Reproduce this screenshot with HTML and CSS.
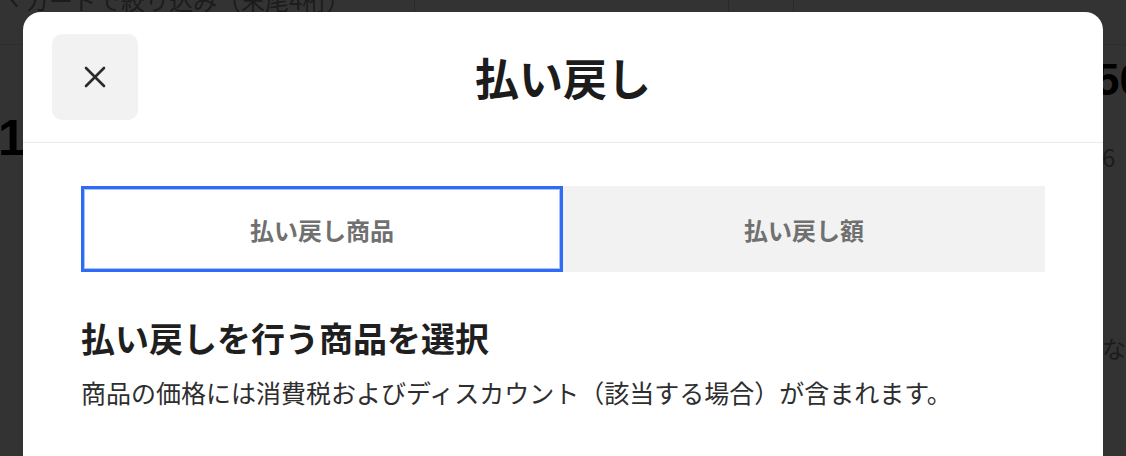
FILE: index.html
```html
<!DOCTYPE html>
<html lang="ja">
<head>
<meta charset="utf-8">
<title>払い戻し</title>
<link rel="stylesheet" href="styles.css">
</head>
<body>
<div class="page">
  <div class="toolbar">
    <div class="search"><span class="search-icon">ヽ</span>カードで絞り込み（末尾4桁）</div>
    <div class="tool-box wide"></div>
    <div class="tool-box narrow"></div>
  </div>
  <div class="summary">
    <div class="left-col">
      <div class="big-num">1,280</div>
    </div>
    <div class="right-col">
      <div class="big-amount">¥550</div>
      <div class="small-num">6</div>
      <div class="note">なし</div>
    </div>
  </div>
</div>

<div class="overlay">
  <div class="modal">
    <div class="modal-header">
      <button class="close-btn" aria-label="閉じる">
        <svg width="22" height="22" viewBox="0 0 22 22" aria-hidden="true">
          <path d="M2 2 L20 20 M20 2 L2 20" stroke="#2b2b2b" stroke-width="2.6" stroke-linecap="round" fill="none"/>
        </svg>
      </button>
      <h1 class="modal-title">払い戻し</h1>
      <span class="header-spacer"></span>
    </div>
    <div class="modal-body">
      <div class="tabs">
        <button class="tab tab-active">払い戻し商品</button>
        <button class="tab">払い戻し額</button>
      </div>
      <h2 class="section-title">払い戻しを行う商品を選択</h2>
      <p class="section-desc">商品の価格には消費税およびディスカウント（該当する場合）が含まれます。</p>
    </div>
  </div>
</div>
</body>
</html>
```

FILE: styles.css
```css
html, body {
  margin: 0;
  padding: 0;
  overflow: hidden;
}

body {
  width: 1126px;
  height: 456px;
  background: #ffffff;
  font-family: "Noto Sans CJK JP", "Noto Sans", sans-serif;
  color: #222;
}

/* background page (behind overlay) */
.page {
  width: 1126px;
  height: 456px;
  overflow: hidden;
}

.toolbar {
  display: flex;
  height: 44px;
  border-bottom: 1px solid #e6e6e6;
}

.search {
  width: 415px;
  box-sizing: border-box;
  border-right: 1px solid #cfcfcf;
  font-size: 24px;
  line-height: 24px;
  color: #8a8a8a;
  margin-top: -12px;
  white-space: nowrap;
  padding-left: 0;
}

.search-icon {
  display: inline-block;
  width: 25px;
  color: #8a8a8a;
}

.tool-box {
  box-sizing: border-box;
  border-right: 1px solid #cfcfcf;
}

.tool-box.wide { width: 314px; }
.tool-box.narrow { width: 65px; }

.summary {
  display: flex;
  justify-content: space-between;
  width: 1126px;
}

.left-col {
  padding-top: 68px;
}

.big-num {
  font-family: "Liberation Sans", sans-serif;
  font-weight: 700;
  font-size: 50px;
  line-height: 50px;
  color: #000;
  margin-left: -2px;
}

.right-col {
  width: 24px;
  padding-top: 10px;
  white-space: nowrap;
}

.big-amount {
  font-family: "Liberation Sans", sans-serif;
  font-weight: 700;
  font-size: 44px;
  line-height: 50px;
  color: #000;
  margin-left: -56px;
}

.small-num {
  font-size: 24px;
  line-height: 28px;
  color: #8a8a8a;
  margin-top: 38px;
  margin-left: 0;
}

.note {
  font-size: 24px;
  line-height: 28px;
  color: #8a8a8a;
  margin-top: 163px;
}

/* overlay + modal */
.overlay {
  position: fixed;
  inset: 0;
  background: rgba(0, 0, 0, 0.8);
  overflow: hidden;
}

.modal {
  width: 1080px;
  height: 480px;
  margin: 12px auto 0;
  background: #ffffff;
  border-radius: 18px 18px 0 0;
}

.modal-header {
  display: grid;
  grid-template-columns: 86px 1fr 86px;
  align-items: center;
  padding: 22px 29px;
  border-bottom: 1px solid #ebebeb;
}

.close-btn {
  width: 86px;
  height: 86px;
  border: none;
  border-radius: 10px;
  background: #f2f2f2;
  display: flex;
  align-items: center;
  justify-content: center;
  padding: 0;
}

.modal-title {
  margin: 0;
  text-align: center;
  font-size: 44px;
  line-height: 60px;
  font-weight: 700;
  color: #1c1c1c;
}

.modal-body {
  padding: 43px 58px 0;
}

.tabs {
  display: grid;
  grid-template-columns: 1fr 1fr;
  height: 86px;
}

.tab {
  border: none;
  background: #f2f2f2;
  font-family: inherit;
  font-size: 24px;
  font-weight: 700;
  color: #707070;
  padding: 0;
}

.tab-active {
  background: #ffffff;
  border: 3px solid #2e6cf6;
  box-shadow: inset 0 0 0 1px #a9c2f8;
}

.section-title {
  margin: 42px 0 0;
  font-size: 34px;
  line-height: 48px;
  font-weight: 700;
  color: #1f1f1f;
}

.section-desc {
  margin: 12px 0 0;
  font-size: 25px;
  line-height: 36px;
  color: #2e2e2e;
}
```
